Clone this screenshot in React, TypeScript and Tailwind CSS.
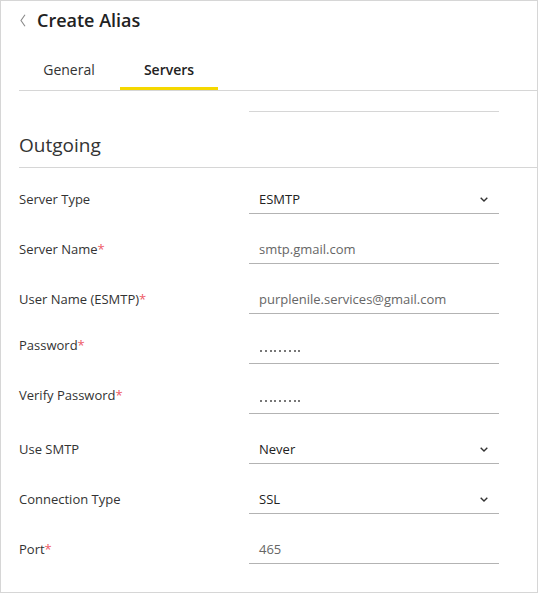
import React from "react";

type Row = {
  label: string;
  required?: boolean;
  kind: "select" | "text" | "password";
  value?: string;
  raise?: boolean;
};

const rows: Row[] = [
  { label: "Server Type", kind: "select", value: "ESMTP" },
  { label: "Server Name", required: true, kind: "text", value: "smtp.gmail.com" },
  { label: "User Name (ESMTP)", required: true, kind: "text", value: "purplenile.services@gmail.com" },
  { label: "Password", required: true, kind: "password", raise: true },
  { label: "Verify Password", required: true, kind: "password", raise: true },
  { label: "Use SMTP", kind: "select", value: "Never" },
  { label: "Connection Type", kind: "select", value: "SSL" },
  { label: "Port", required: true, kind: "text", value: "465" },
];

const ChevronDown = () => (
  <svg width="8" height="5" viewBox="0 0 8 5" fill="none" className="mr-[11px]">
    <path d="M0.7 0.7 L4 3.9 L7.3 0.7" stroke="#333" strokeWidth="1.4" />
  </svg>
);

const Dots = () => (
  <div className="flex gap-[2.8px] mt-[2px] ml-px">
    {Array.from({ length: 9 }).map((_, i) => (
      <span key={i} className="w-[2px] h-[2px] rounded-full bg-[#4a4a4a]" />
    ))}
  </div>
);

export default function App() {
  return (
    <div
      className="w-[538px] h-[593px] border border-[#d6d6d6] bg-white overflow-hidden"
      style={{ fontFamily: '"Open Sans", "Noto Sans", sans-serif' }}
    >
      {/* header */}
      <div className="flex items-center pt-[7px] pl-[19px] h-[24px] box-content">
        <svg width="6" height="13" viewBox="0 0 6 13" fill="none" className="mt-[1px]">
          <path d="M5 0.8 L1 6.5 L5 12.2" stroke="#8a8a8a" strokeWidth="1.1" />
        </svg>
        <h1 className="ml-[11px] text-[18px] leading-[24px] font-semibold text-[#222]">Create Alias</h1>
      </div>

      {/* tabs */}
      <div className="ml-[18px] mt-[19px] flex border-b border-[#d6d6d6]">
        <div className="w-[100px] h-[39px] pt-[9px] text-center text-[14px] leading-5 text-[#333]">
          General
        </div>
        <div className="ml-px w-[98px] h-[39px] pt-[9px] text-center text-[14px] leading-5 font-semibold text-[#222] border-b-[3px] border-[#f5d800]">
          Servers
        </div>
      </div>

      <div className="pl-[18px]">
        <div className="ml-[230px] w-[250px] h-[21px] border-b border-[#d6d6d6]" />

        <div className="pt-[21px] pb-[10px] border-b border-[#d6d6d6]">
          <h2 className="text-[19px] leading-[24px] text-[#333]">Outgoing</h2>
        </div>

        <div className="pt-[18px]">
          {rows.map((r) => (
            <div key={r.label} className="flex h-[50px] items-start">
              <div
                className={`w-[230px] h-7 flex items-center text-[13px] text-[#333] ${r.raise ? "-mt-[4px]" : ""}`}
              >
                {r.label}
                {r.required && <span className="text-[#ee5b66]">*</span>}
              </div>
              <div className="w-[250px] h-7 border-b border-[#b3b3b3] flex items-center justify-between pl-[10px]">
                {r.kind === "password" ? (
                  <Dots />
                ) : (
                  <span className={`text-[13px] ${r.kind === "select" ? "text-[#222]" : "text-[#666]"}`}>
                    {r.value}
                  </span>
                )}
                {r.kind === "select" && <ChevronDown />}
              </div>
            </div>
          ))}
        </div>
      </div>
    </div>
  );
}
